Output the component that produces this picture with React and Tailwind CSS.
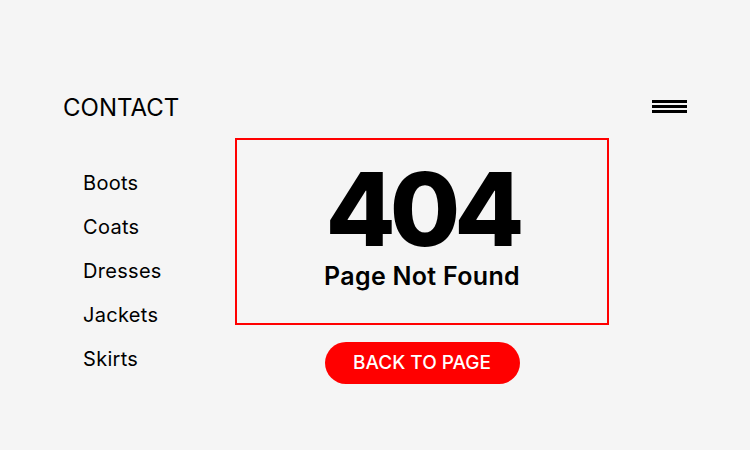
export default function App() {
  const items = ["Boots", "Coats", "Dresses", "Jackets", "Skirts"];

  return (
    <div
      className="w-[750px] h-[450px] bg-[#f5f5f5] text-black px-[63px] pt-[90px]"
      style={{ fontFamily: "Inter, 'Noto Sans', sans-serif" }}
    >
      <header className="flex items-center justify-between h-[36px]">
        <div className="text-[24px] leading-none font-normal">CONTACT</div>
        <button className="flex flex-col gap-[2px] w-[35px] mt-[-4px]">
          <span className="block h-[3px] w-full bg-black" />
          <span className="block h-[3px] w-full bg-black" />
          <span className="block h-[3px] w-full bg-black" />
        </button>
      </header>

      <div className="flex">
        <nav className="w-[172px] pl-[20px] pt-[35px]">
          <ul>
            {items.map((item) => (
              <li key={item} className="text-[20px] leading-[44px] h-[44px] tracking-[0.3px]">
                {item}
              </li>
            ))}
          </ul>
        </nav>

        <main className="flex flex-col items-center w-[374px] pt-[12px]">
          <div className="w-[374px] h-[187px] border-2 border-[#ff0000] flex flex-col items-center pt-[27px]">
            <div className="text-[102px] leading-[84px] font-extrabold tracking-[-6px]">404</div>
            <div className="text-[25px] leading-[30px] font-semibold mt-[10px] tracking-[0.3px]">Page Not Found</div>
          </div>
          <button className="mt-[17px] w-[195px] h-[42px] rounded-full bg-[#ff0000] text-white text-[19px] font-medium">
            BACK TO PAGE
          </button>
        </main>
      </div>
    </div>
  );
}
